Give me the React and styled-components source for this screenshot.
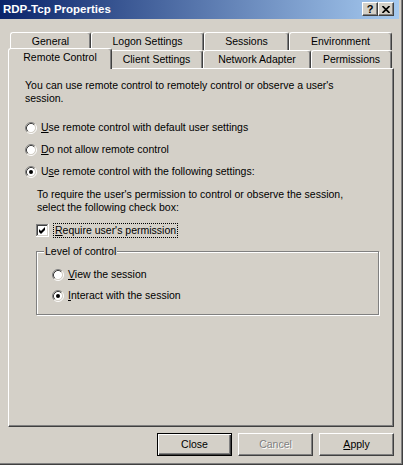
import React from "react";
import styled, { createGlobalStyle, css } from "styled-components";

const GlobalStyle = createGlobalStyle`
  html, body {
    margin: 0;
    padding: 0;
    background: #d4d0c8;
  }
  body {
    font-family: "Liberation Sans", Arial, sans-serif;
    font-size: 10.5px;
    color: #000;
  }
`;

const Window = styled.div`
  box-sizing: border-box;
  width: 403px;
  height: 465px;
  padding: 0 4px 4px 0;
  background: #d4d0c8;
  box-shadow: inset -1px -1px 0 #404040, inset -2px -2px 0 #808080;
  display: flex;
  flex-direction: column;
`;

const TitleBar = styled.div`
  height: 19px;
  display: flex;
  align-items: flex-start;
  background: linear-gradient(to right, #0a246a, #a6caf0);
  padding: 0 5px 0 3px;
`;

const TitleText = styled.div`
  flex: 1;
  padding-top: 3px;
  color: #fff;
  font-weight: bold;
  font-size: 11.5px;
  line-height: 13px;
  white-space: nowrap;
`;

const CaptionButton = styled.div`
  box-sizing: border-box;
  width: 16px;
  height: 14px;
  margin-top: 2px;
  background: #d4d0c8;
  border: 1px solid;
  border-color: #fff #404040 #404040 #fff;
  box-shadow: inset -1px -1px 0 #808080;
  display: flex;
  align-items: center;
  justify-content: center;
  font-weight: bold;
  font-size: 11px;
  line-height: 11px;
`;

const Body = styled.div`
  padding: 13px 5px 0 8px;
  display: flex;
  flex-direction: column;
`;

const TabStrip = styled.div`
  padding-left: 2px;
  display: flex;
  flex-direction: column;
`;

const TabRow = styled.div`
  display: flex;
  align-items: flex-end;
  height: 18px;
`;

const Tab = styled.div`
  box-sizing: border-box;
  width: ${(p) => p.$w}px;
  height: 18px;
  border-top: 1px solid #fff;
  border-left: 1px solid #fff;
  border-right: 1px solid #404040;
  border-radius: 3px 3px 0 0;
  box-shadow: inset -1px 0 0 #808080;
  background: #d4d0c8;
  display: flex;
  align-items: center;
  justify-content: center;
  padding-bottom: 1px;
  white-space: nowrap;
  ${(p) =>
    p.$active &&
    css`
      position: relative;
      z-index: 1;
      height: 21px;
      margin: -2px -2px -1px -2px;
      padding-bottom: 4px;
    `}
`;

const Panel = styled.div`
  box-sizing: border-box;
  height: 359px;
  border: 1px solid;
  border-color: #fff #404040 #404040 #fff;
  box-shadow: inset -1px -1px 0 #808080;
  padding: 10px 0 0 16px;
  display: flex;
  flex-direction: column;
  align-items: flex-start;
`;

const Text = styled.div`
  line-height: 13px;
  margin-top: ${(p) => p.$top || 0}px;
  margin-left: ${(p) => p.$left || 0}px;
  white-space: nowrap;
`;

const Option = styled.div`
  display: flex;
  align-items: center;
  gap: 4px;
  height: 13px;
  line-height: 13px;
  margin-top: ${(p) => p.$top || 0}px;
  margin-left: ${(p) => p.$left || 0}px;
  white-space: nowrap;
`;

const Key = styled.span`
  text-decoration: underline;
`;

const Focus = styled.span`
  outline: 1px dotted #000;
  outline-offset: 0;
  padding: 0 1px 0 1px;
  margin-left: 1px;
  line-height: 13px;
`;

const GroupBox = styled.div`
  position: relative;
  box-sizing: border-box;
  width: 343px;
  height: 64px;
  margin-top: 14px;
  margin-left: 11px;
  border: 1px solid #808080;
  box-shadow: inset 1px 1px 0 #fff, 1px 1px 0 #fff;
  padding: 16px 0 0 15px;
`;

const Legend = styled.span`
  position: absolute;
  top: -7px;
  left: 7px;
  padding: 0 1px;
  background: #d4d0c8;
  line-height: 13px;
  white-space: nowrap;
`;

const ButtonRow = styled.div`
  display: flex;
  justify-content: flex-end;
  gap: 6px;
  margin-top: 6px;
`;

const Button = styled.button`
  box-sizing: border-box;
  width: 75px;
  height: 23px;
  padding: 0 0 1px;
  font: 10.5px "Liberation Sans", Arial, sans-serif;
  color: #000;
  background: #d4d0c8;
  border: 1px solid;
  border-color: #fff #404040 #404040 #fff;
  box-shadow: inset -1px -1px 0 #808080;
  ${(p) =>
    p.$default &&
    css`
      border: 1px solid #000;
      box-shadow: inset 1px 1px 0 #fff, inset -1px -1px 0 #404040,
        inset -2px -2px 0 #808080;
    `}
  ${(p) =>
    p.disabled &&
    css`
      color: #808080;
      text-shadow: 1px 1px 0 #fff;
    `}
`;

const Radio = ({ checked }) => (
  <svg width="12" height="12" viewBox="0 0 12 12">
    <circle cx="6" cy="6" r="4.2" fill="#fff" />
    <path d="M2.11 9.89A5.5 5.5 0 0 1 9.89 2.11" fill="none" stroke="#808080" />
    <path d="M9.89 2.11A5.5 5.5 0 0 1 2.11 9.89" fill="none" stroke="#fff" />
    <path d="M2.82 9.18A4.5 4.5 0 0 1 9.18 2.82" fill="none" stroke="#404040" />
    <path d="M9.18 2.82A4.5 4.5 0 0 1 2.82 9.18" fill="none" stroke="#d4d0c8" />
    {checked && <circle cx="6" cy="6" r="2" fill="#000" />}
  </svg>
);

const Checkbox = ({ checked }) => (
  <svg width="13" height="13" viewBox="0 0 13 13" shapeRendering="crispEdges">
    <rect x="0" y="0" width="13" height="13" fill="#fff" />
    <path d="M0 0H12V1H1V12H0Z" fill="#808080" />
    <path d="M1 1H11V2H2V11H1Z" fill="#404040" />
    <path d="M11 1H12V12H1V11H11Z" fill="#d4d0c8" />
    <rect x="2" y="2" width="9" height="9" fill="#fff" />
    {checked && (
      <path d="M3 5L5 7L9 3V6L5 10L3 8Z" fill="#000" shapeRendering="auto" />
    )}
  </svg>
);

const CloseGlyph = () => (
  <svg width="8" height="7" viewBox="0 0 8 7">
    <path d="M0.5 0L7.5 7M7.5 0L0.5 7" stroke="#000" strokeWidth="1.6" />
  </svg>
);

const row1 = [
  { label: "General", w: 81 },
  { label: "Logon Settings", w: 113 },
  { label: "Sessions", w: 85 },
  { label: "Environment", w: 103 },
];

const row2 = [
  { label: "Remote Control", w: 104, active: true },
  { label: "Client Settings", w: 93 },
  { label: "Network Adapter", w: 108 },
  { label: "Permissions", w: 81 },
];

export default function App() {
  return (
    <>
      <GlobalStyle />
      <Window>
        <TitleBar>
          <TitleText>RDP-Tcp Properties</TitleText>
          <CaptionButton>?</CaptionButton>
          <CaptionButton>
            <CloseGlyph />
          </CaptionButton>
        </TitleBar>
        <Body>
          <TabStrip>
            <TabRow>
              {row1.map((t) => (
                <Tab key={t.label} $w={t.w}>
                  {t.label}
                </Tab>
              ))}
            </TabRow>
            <TabRow>
              {row2.map((t) => (
                <Tab key={t.label} $w={t.w} $active={t.active}>
                  {t.label}
                </Tab>
              ))}
            </TabRow>
          </TabStrip>
          <Panel>
            <Text>
              You can use remote control to remotely control or observe a user's
              <br />
              session.
            </Text>
            <Option $top={16}>
              <Radio />
              <span>
                <Key>U</Key>se remote control with default user settings
              </span>
            </Option>
            <Option $top={9}>
              <Radio />
              <span>
                <Key>D</Key>o not allow remote control
              </span>
            </Option>
            <Option $top={9}>
              <Radio checked />
              <span>
                U<Key>s</Key>e remote control with the following settings:
              </span>
            </Option>
            <Text $top={10} $left={12}>
              To require the user's permission to control or observe the session,
              <br />
              select the following check box:
            </Text>
            <Option $top={10} $left={11}>
              <Checkbox checked />
              <Focus>
                <Key>R</Key>equire user's permission
              </Focus>
            </Option>
            <GroupBox>
              <Legend>Level of control</Legend>
              <Option>
                <Radio />
                <span>
                  <Key>V</Key>iew the session
                </span>
              </Option>
              <Option $top={8}>
                <Radio checked />
                <span>
                  <Key>I</Key>nteract with the session
                </span>
              </Option>
            </GroupBox>
          </Panel>
          <ButtonRow>
            <Button $default>Close</Button>
            <Button disabled>Cancel</Button>
            <Button>
              <Key>A</Key>pply
            </Button>
          </ButtonRow>
        </Body>
      </Window>
    </>
  );
}
